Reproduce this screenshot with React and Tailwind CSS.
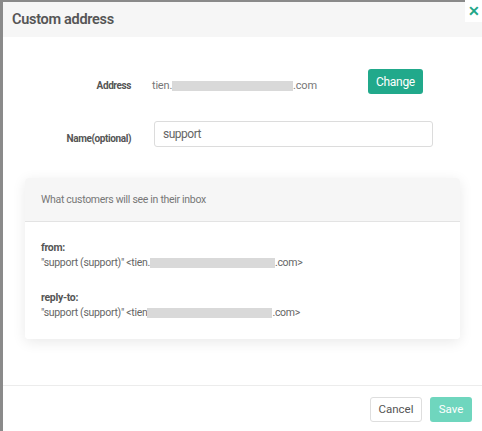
import React from 'react';

const Blur = ({ w }) => (
  <span className={`inline-block h-[10px] bg-[#d9d9d9] align-middle ${w}`} />
);

const App = () => {
  return (
    <div
      className="relative w-[482px] h-[431px] overflow-hidden bg-[#8a8a8a] pl-[3px] pt-[2px]"
      style={{ fontFamily: 'Roboto, "Liberation Sans", sans-serif' }}
    >
      {/* close button sits over the modal corner */}
      <div className="absolute right-0 top-0 w-[17px] h-[22px] bg-white flex items-center justify-center">
        <span className="text-[#1fa688] text-[14px] font-bold leading-none">✕</span>
      </div>

      <div className="h-full bg-white flex flex-col">
        {/* Header */}
        <div className="h-[35px] bg-[#f6f6f6] flex items-center pl-[9px]">
          <h2 className="text-[14.5px] tracking-[-0.3px] font-semibold text-[#555]">Custom address</h2>
        </div>

        {/* Body */}
        <div className="flex-1 pt-[32px]">
          <div className="flex items-start h-[25px]">
            <div className="w-[128px] text-right text-[10px] tracking-[-0.4px] font-bold text-[#555] pt-[10px] leading-[14px]">
              Address
            </div>
            <div className="ml-[21px] pt-[9px] text-[11px] tracking-[-0.2px] text-[#777] leading-[16px] w-[216px] flex items-center">
              tien.<Blur w="w-[121px]" />.com
            </div>
            <button className="h-[25px] w-[55px] rounded-[3px] bg-[#21a98b] text-white text-[12px] tracking-[-0.3px] leading-none">
              Change
            </button>
          </div>

          <div className="flex items-start mt-[27px]">
            <div className="w-[128px] text-right text-[10px] tracking-[-0.4px] font-bold text-[#555] pt-[11px] leading-[14px]">
              Name(optional)
            </div>
            <div className="ml-[23px] w-[279px] h-[26px] border border-[#dcdcdc] rounded-[3px] flex items-center pl-[8px] text-[12px] tracking-[-0.5px] text-[#666]">
              support
            </div>
          </div>

          {/* Preview */}
          <div className="ml-[22px] mt-[31px] w-[435px] rounded-[4px] shadow-[0_3px_14px_rgba(0,0,0,0.09)] overflow-hidden">
            <div className="h-[44px] bg-[#f6f6f6] border-b border-[#e3e3e3] flex items-center pl-[16px] text-[10.5px] tracking-[-0.3px] text-[#777]">
              What customers will see in their inbox
            </div>
            <div className="bg-white pl-[16px] pt-[18px] pb-[19px] text-[10.5px] tracking-[-0.3px] text-[#666]">
              <div className="font-bold text-[#555] leading-[15px]">from:</div>
              <div className="leading-[15px] flex items-center">
                "support (support)" &lt;tien.<Blur w="w-[125px]" />.com&gt;
              </div>
              <div className="font-bold text-[#555] leading-[15px] mt-[20px]">reply-to:</div>
              <div className="leading-[15px] flex items-center">
                "support (support)" &lt;tien<Blur w="w-[125px]" />.com&gt;
              </div>
            </div>
          </div>
        </div>

        {/* Footer */}
        <div className="h-[46px] border-t border-[#ececec] flex items-start justify-end gap-[8px] pt-[11px] pr-[10px]">
          <button className="h-[25px] w-[52px] rounded-[3px] border border-[#dedede] bg-white text-[11.5px] text-[#555]">
            Cancel
          </button>
          <button className="h-[25px] w-[42px] rounded-[3px] bg-[#6fd6be] text-white text-[11.5px]">
            Save
          </button>
        </div>
      </div>
    </div>
  );
};

export default App;
